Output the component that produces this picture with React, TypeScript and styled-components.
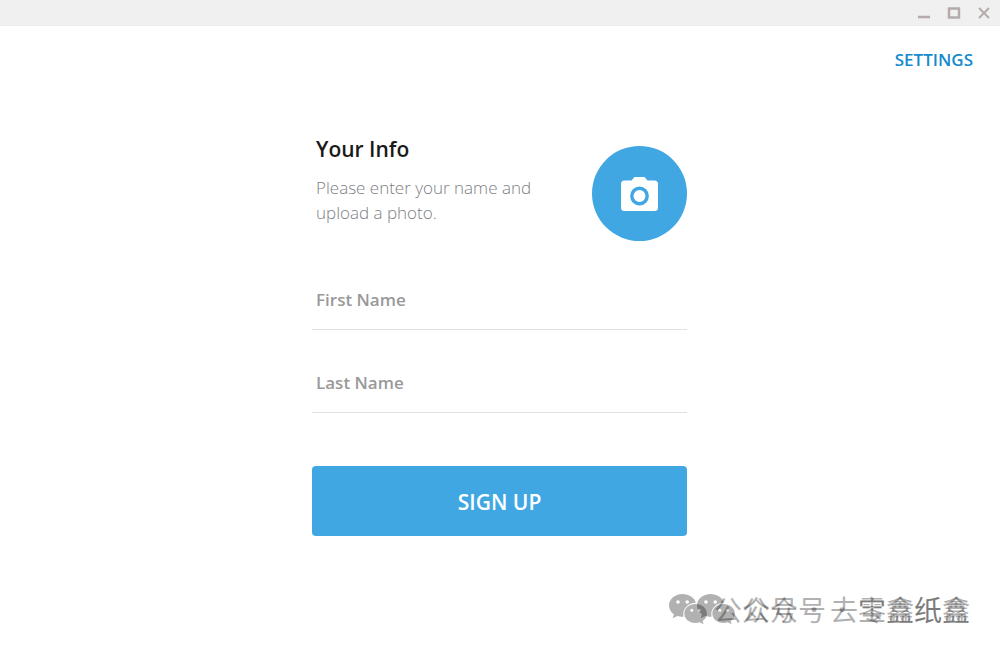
import React, { useState } from "react";
import styled, { createGlobalStyle } from "styled-components";

const GlobalStyle = createGlobalStyle`
  * { box-sizing: border-box; }
  body {
    margin: 0;
    background: #fff;
    font-family: "Open Sans", "Noto Sans CJK SC", sans-serif;
  }
  button, input { font-family: inherit; }
`;

const Page = styled.div`
  position: relative;
  display: flex;
  flex-direction: column;
  min-height: 100vh;
`;

const TitleBar = styled.header`
  display: flex;
  justify-content: flex-end;
  height: 26px;
  padding-right: 1px;
  background: #f0f0f0;
  border-bottom: 1px solid #ebebeb;
`;

const WindowButton = styled.button`
  display: flex;
  align-items: center;
  justify-content: center;
  width: 30px;
  height: 26px;
  padding: 0;
  border: 0;
  background: none;
  color: #b5abab;
`;

const TopBar = styled.nav`
  display: flex;
  justify-content: flex-end;
  padding: 22px 27px 0;
`;

const SettingsLink = styled.a`
  color: #168acd;
  font-size: 17px;
  font-weight: 600;
  line-height: 24px;
  text-decoration: none;
`;

const Form = styled.form`
  width: 100%;
  max-width: 376px;
  margin: 62px auto 0;
  padding-right: 1px;
`;

const Intro = styled.div`
  display: flex;
  justify-content: space-between;
  padding-left: 4px;
`;

const Heading = styled.h1`
  margin: 0 0 11px;
  color: #1a1a1a;
  font-size: 21px;
  font-weight: 600;
  line-height: 30px;
`;

const Hint = styled.p`
  max-width: 230px;
  margin: 0;
  color: #7c8084;
  font-size: 17px;
  font-weight: 300;
  line-height: 25px;
`;

const PhotoButton = styled.button`
  display: flex;
  align-items: center;
  justify-content: center;
  width: 95px;
  height: 95px;
  margin-top: 12px;
  padding: 0;
  border: 0;
  border-radius: 50%;
  background: #40a7e3;
`;

const Field = styled.input`
  display: block;
  width: 100%;
  height: 60px;
  margin-bottom: 23px;
  padding: 0 4px;
  border: 0;
  border-bottom: 1px solid #e0e0e0;
  outline: 0;
  background: none;
  color: #1a1a1a;
  font-size: 17px;
  font-weight: 600;
  &::placeholder { color: #999; opacity: 1; }
`;

const Fields = styled.div`
  padding-top: 29px;
`;

const SubmitButton = styled.button`
  width: 100%;
  height: 70px;
  margin-top: 30px;
  padding: 2px 0 0;
  border: 0;
  border-radius: 4px;
  background: #40a7e3;
  color: #fff;
  font-size: 21px;
  font-weight: 600;
`;

const Watermark = styled.div`
  position: absolute;
  right: 30px;
  bottom: 21px;
  display: flex;
  align-items: center;
  height: 40px;
  color: #000;
  opacity: 0.3;
  font-family: "Noto Sans CJK SC", sans-serif;
  font-size: 28px;
  line-height: 40px;
  white-space: nowrap;
`;

const Account = styled.span`
  margin-left: 6px;
`;

const Dot = styled.span`
  width: 32px;
  font-family: "Open Sans", sans-serif;
  font-weight: 700;
  text-align: center;
`;

const ChatMark = () => (
  <svg width="39" height="32" viewBox="0 0 39 32" aria-hidden="true">
    <path fill="currentColor" fillRule="evenodd" d="M13.5 1C6 1 0 6 0 12.4c0 3.600 2 6.800 5 8.900L3.700 25.300l4.700-2.400c1.700.5 3.200.8 5.200.8h1c-1.800-7.200 4.300-13.900 12-13.900h.3C25.500 4.700 20 1 13.500 1ZM9 7.200a1.800 1.800 0 1 1 0 3.600 1.800 1.800 0 0 1 0-3.600Zm9.200 0a1.800 1.800 0 1 1 0 3.600 1.800 1.800 0 0 1 0-3.600Z" />
    <path fill="currentColor" fillRule="evenodd" d="M26.500 11C20 11 15.300 15.400 15.300 20.500S20 30 26.500 30c1.500 0 2.900-.3 4.200-.7l3.900 2-1-3.400c2.600-1.700 4.300-4.400 4.300-7.400C37.900 15.400 33 11 26.500 11Zm-3.700 4.800a1.500 1.500 0 1 1 0 3 1.500 1.500 0 0 1 0-3Zm7.500 0a1.500 1.500 0 1 1 0 3 1.500 1.500 0 0 1 0-3Z" />
  </svg>
);

const AccountMark = ({ name }: { name: string }) => (
  <Watermark>
    <ChatMark />
    <Account>公众号</Account>
    <Dot>·</Dot>
    <span>{name}</span>
  </Watermark>
);

export default function App() {
  const [first, setFirst] = useState("");
  const [last, setLast] = useState("");
  return (
    <Page>
      <GlobalStyle />
      <TitleBar>
        <WindowButton aria-label="Minimize">
          <svg width="14" height="14"><path d="M1 11h12" stroke="currentColor" strokeWidth="2.500" /></svg>
        </WindowButton>
        <WindowButton aria-label="Maximize">
          <svg width="14" height="14"><path d="M2 2.500h10v9H2z" fill="none" stroke="currentColor" strokeWidth="2.500" /></svg>
        </WindowButton>
        <WindowButton aria-label="Close">
          <svg width="14" height="14"><path d="M2 2l10 10M12 2L2 12" stroke="currentColor" strokeWidth="2" /></svg>
        </WindowButton>
      </TitleBar>
      <TopBar><SettingsLink href="#settings">SETTINGS</SettingsLink></TopBar>
      <Form onSubmit={(e) => e.preventDefault()}>
        <Intro>
          <div>
            <Heading>Your Info</Heading>
            <Hint>Please enter your name and upload a photo.</Hint>
          </div>
          <PhotoButton type="button" aria-label="Upload photo">
            <svg width="37" height="36" viewBox="0.5 0 37 36">
              <path fill="#fff" d="M4 4.500h7L14 1h10l3 3.500h7a3.500 3.500 0 0 1 3.500 3.500v23.500a3.500 3.500 0 0 1-3.500 3.500H4A3.500 3.500 0 0 1 .5 31.500V8A3.500 3.500 0 0 1 4 4.500Z" />
              <circle cx="19" cy="20" r="7.700" fill="none" stroke="#40a7e3" strokeWidth="3.400" />
            </svg>
          </PhotoButton>
        </Intro>
        <Fields>
          <Field aria-label="First Name" placeholder="First Name" value={first} onChange={(e) => setFirst(e.target.value)} />
          <Field aria-label="Last Name" placeholder="Last Name" value={last} onChange={(e) => setLast(e.target.value)} />
        </Fields>
        <SubmitButton type="submit">SIGN UP</SubmitButton>
      </Form>
      <AccountMark name="去零盒纸盒" />
      <AccountMark name="宝鑫纸鑫" />
    </Page>
  );
}
